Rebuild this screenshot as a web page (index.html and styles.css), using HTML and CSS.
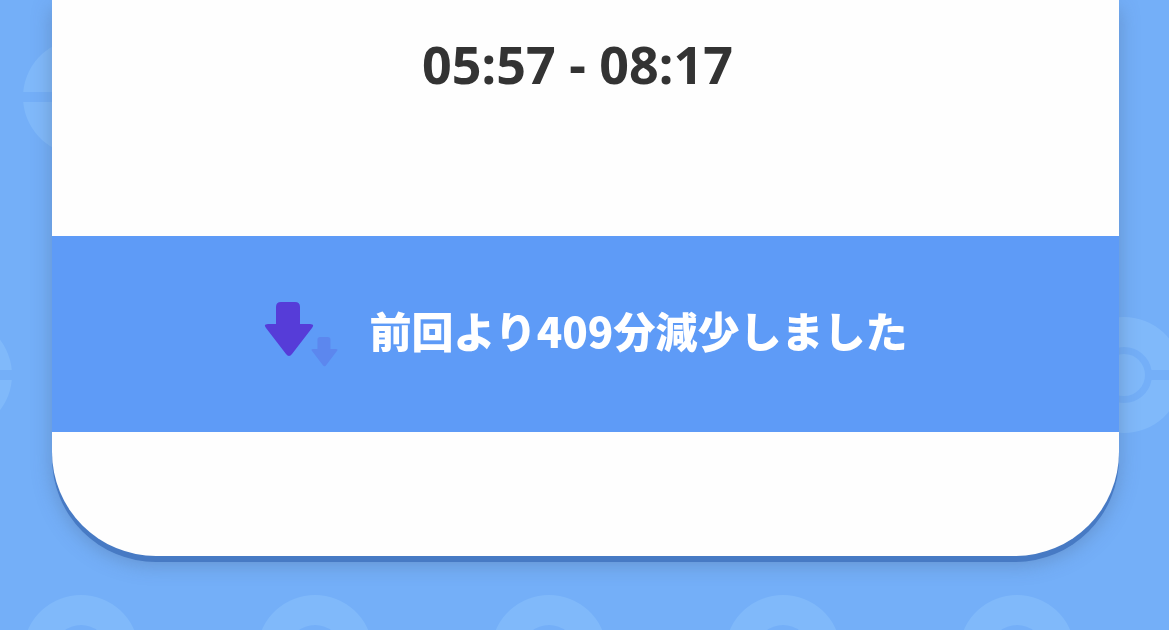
FILE: index.html
```html
<!DOCTYPE html>
<html lang="ja">
<head>
    <meta charset="UTF-8">
    <meta name="viewport" content="width=device-width, initial-scale=1.0">
    <title>睡眠時間</title>
    <link rel="stylesheet" href="styles.css">
</head>
<body>
<svg class="pattern" aria-hidden="true">
    <defs>
        <g id="ball">
            <path d="M-57.78 -5A58 58 0 0 1 57.78 -5H27.55A28 28 0 0 0 -27.55 -5Z"/>
            <path d="M-57.78 5A58 58 0 0 0 57.78 5H27.55A28 28 0 0 1 -27.55 5Z"/>
            <circle r="21"/>
        </g>
        <pattern id="balls" x="-36" y="36" width="234" height="556" patternUnits="userSpaceOnUse">
            <use href="#ball" x="117" y="61"/>
            <use href="#ball" x="-10" y="339"/>
            <use href="#ball" x="224" y="339"/>
        </pattern>
    </defs>
    <rect width="100%" height="100%" fill="url(#balls)"/>
</svg>

<main class="card">
    <div class="time">05:57 - 08:17</div>
    <div class="result">
        <svg class="arrows" width="76" height="68" viewBox="0 0 76 68" aria-hidden="true">
            <defs>
                <path id="arrow" d="M17 2H31Q36 2 36 7V24H46Q51 24 48 28L28 54Q25 58 22 54L2 28Q-1 24 4 24H12V7Q12 2 17 2Z"/>
            </defs>
            <use href="#arrow" class="arrow-main"/>
            <use href="#arrow" class="arrow-sub" transform="translate(47 36) scale(.54)"/>
        </svg>
        <p class="message">前回より409分減少しました</p>
    </div>
</main>
</body>
</html>
```

FILE: styles.css
```css
body {
    margin: 0;
    min-height: 100vh;
    background-color: #74aff8;
    font-family: "Noto Sans", "Noto Sans CJK JP", sans-serif;
}
.pattern {
    position: fixed;
    top: 0;
    left: 0;
    z-index: -1;
    width: 100%;
    height: 100%;
    fill: #80b9fa;
}
.card {
    margin: 0 50px 0 52px;
    padding-bottom: 124px;
    background-color: #fefefe;
    border-radius: 0 0 104px 104px;
    box-shadow: 0 6px 0 #477ac4, 0 8px 20px rgba(70, 90, 120, 0.35);
}
.time {
    padding: 30px 16px 138px 0;
    color: #333;
    font-size: 52px;
    font-weight: 700;
    line-height: 68px;
    text-align: center;
}
.result {
    display: flex;
    align-items: center;
    justify-content: center;
    gap: 30px;
    padding: 64px 0;
    background-color: #5e9bf7;
}
.arrows {
    flex-shrink: 0;
}
.arrow-main {
    fill: #563cd8;
}
.arrow-sub {
    fill: #5c87ee;
}
.message {
    margin: 0;
    padding-bottom: 8px;
    color: #fff;
    font-family: "Noto Sans CJK JP", sans-serif;
    font-size: 42px;
    font-weight: 900;
    line-height: 60px;
}
```
